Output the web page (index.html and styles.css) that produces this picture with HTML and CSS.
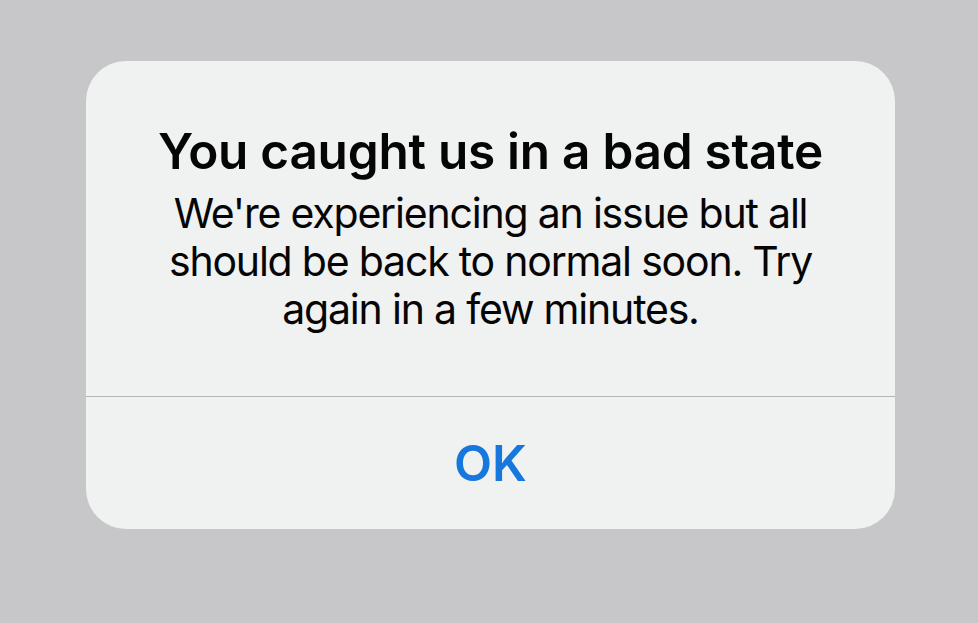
FILE: index.html
```html
<!DOCTYPE html>
<html lang="en">

<head>
    <meta charset="UTF-8">
    <meta name="viewport" content="width=device-width, initial-scale=1.0">
    <title>Alert</title>
    <link rel="stylesheet" href="styles.css">
</head>

<body>
    <main class="backdrop">
        <div class="alert" role="alertdialog" aria-labelledby="alert-title">
            <section class="alert-body">
                <h1 id="alert-title">You caught us in a bad state</h1>
                <p>We're experiencing an issue but all<br>should be back to normal soon. Try<br>again in a few minutes.</p>
            </section>
            <div class="alert-actions">
                <button type="button" class="alert-button">OK</button>
            </div>
        </div>
    </main>
</body>

</html>
```

FILE: styles.css
```css
:root {
    --backdrop-color: #c7c7c9;
    --alert-background: #f0f1f1;
    --text-color: #050505;
    --divider-color: #b5b5b7;
    --action-color: #1677dc;
    --font-family: 'Inter', 'Noto Sans', sans-serif;
}

* {
    box-sizing: border-box;
    margin: 0;
    padding: 0;
}

body {
    font-family: var(--font-family);
    background-color: var(--backdrop-color);
    color: var(--text-color);
    min-height: 100vh;
}

.backdrop {
    padding: 61px 0 0 86px;
}

.alert {
    width: 809px;
    height: 468px;
    background-color: var(--alert-background);
    border-radius: 40px;
    display: flex;
    flex-direction: column;
    overflow: hidden;
}

.alert-body {
    height: 336px;
    padding-top: 60px;
    text-align: center;
    border-bottom: 1px solid var(--divider-color);
}

.alert-body h1 {
    font-size: 49.5px;
    line-height: 60px;
    font-weight: 600;
    letter-spacing: -0.25px;
    margin-bottom: 8px;
}

.alert-body p {
    font-size: 41px;
    line-height: 48px;
    font-weight: 400;
    letter-spacing: -1.2px;
}

.alert-actions {
    flex: 1;
    display: flex;
    justify-content: center;
    align-items: center;
}

.alert-button {
    border: none;
    background: none;
    font-family: var(--font-family);
    font-size: 49.5px;
    font-weight: 600;
    color: var(--action-color);
    cursor: pointer;
}
```
